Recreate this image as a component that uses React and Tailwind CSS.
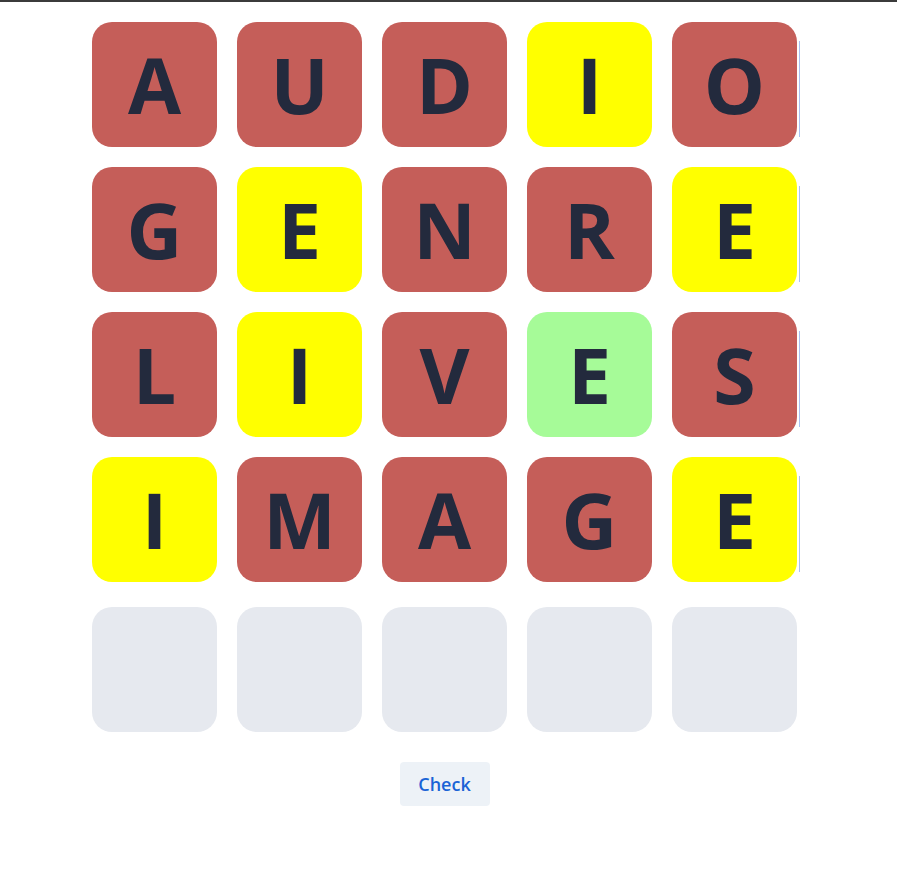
const ROWS = [
  ["A", "U", "D", "I", "O"],
  ["G", "E", "N", "R", "E"],
  ["L", "I", "V", "E", "S"],
  ["I", "M", "A", "G", "E"],
];

const STATES = [
  ["x", "x", "x", "y", "x"],
  ["x", "y", "x", "x", "y"],
  ["x", "y", "x", "g", "x"],
  ["y", "x", "x", "x", "y"],
];

function Tile({ letter, state }) {
  const bg =
    state === "y" ? "bg-[#ffff00]" : state === "g" ? "bg-[#a6fb98]" : state === "x" ? "bg-[#c55e59]" : "bg-[#e6e9ef]";
  return (
    <div
      className={`w-[125px] h-[125px] rounded-[20px] flex items-center justify-center ${bg} text-[#232a3d] text-[77px] font-bold leading-none`}
      style={{ fontFamily: '"Open Sans", "Noto Sans", sans-serif' }}
    >
      {letter}
    </div>
  );
}

export default function App() {
  return (
    <div className="min-h-[885px] bg-white border-t-2 border-[#3b3b3b]">
      <div className="ml-[92px] w-[705px] pt-5 flex flex-col items-center">
        <div className="flex flex-col gap-5">
          {ROWS.map((row, r) => (
            <div key={r} className="relative flex gap-5">
              {row.map((l, i) => (
                <Tile key={i} letter={l} state={STATES[r][i]} />
              ))}
              <div className="absolute left-[707px] top-[19px] w-px h-[96px] bg-[#a9c1f2]" />
            </div>
          ))}
        </div>
        <div className="flex gap-5 mt-[25px]">
          {[0, 1, 2, 3, 4].map((i) => (
            <Tile key={i} letter="" state="" />
          ))}
        </div>
        <button
          className="mt-[30px] w-[90px] h-[44px] rounded bg-[#edf2f7] text-[#1a64d6] text-lg font-semibold"
          style={{ fontFamily: '"Open Sans", "Noto Sans", sans-serif' }}
        >
          Check
        </button>
      </div>
    </div>
  );
}
